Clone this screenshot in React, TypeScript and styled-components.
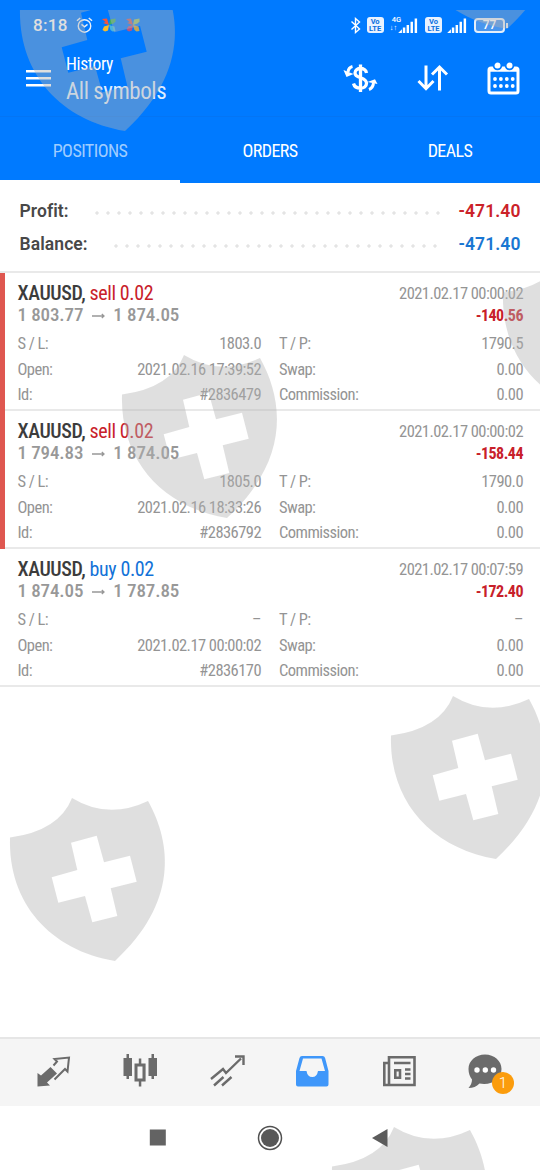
import React from "react";
import styled, { createGlobalStyle } from "styled-components";

const GlobalStyle = createGlobalStyle`
  * { box-sizing: border-box; }
  body { margin: 0; background: #fff; font-family: Roboto, sans-serif; }
`;
const condensed = `font-family: "Roboto Condensed", Roboto, sans-serif; font-stretch: 75%;`;

const Screen = styled.div`
  position: relative;
  width: 540px;
  height: 1170px;
  overflow: hidden;
  display: flex;
  flex-direction: column;
  background: #fff;
  white-space: nowrap;
`;
const Header = styled.header`
  height: 183px;
  flex: none;
  display: flex;
  flex-direction: column;
  background: #007aff;
  color: #fff;
`;
const StatusBar = styled.div`
  height: 48px;
  display: flex;
  align-items: center;
  justify-content: space-between;
  padding: 2px 32px 0 33px;
`;
const StatusGroup = styled.div<{ $gap: number }>`
  display: flex;
  align-items: center;
  gap: ${(p) => p.$gap}px;
`;
const Clock = styled.span`
  font-size: 17px;
  font-weight: 500;
  letter-spacing: 0.3px;
  line-height: 20px;
`;
const Toolbar = styled.div`
  height: 69px;
  display: flex;
  align-items: center;
  padding: 0 20px 8px 26px;
  border-bottom: 1px solid #0475f4;
`;
const Titles = styled.div`
  flex: 1;
  display: flex;
  flex-direction: column;
  margin-left: 15px;
  padding-top: 5px;
  ${condensed}
`;
const Title = styled.span`
  font-size: 17.5px;
  line-height: 22px;
  letter-spacing: -0.35px;
`;
const Subtitle = styled.span`
  font-size: 23px;
  line-height: 33px;
  font-weight: 400;
  letter-spacing: -0.45px;
  color: rgba(255, 255, 255, 0.88);
`;
const ToolbarActions = styled.div`
  display: flex;
  align-items: center;
  gap: 38px;
`;
const Tabs = styled.nav`
  flex: 1;
  display: grid;
  grid-template-columns: repeat(3, 1fr);
`;
const Tab = styled.div<{ $active?: boolean }>`
  display: flex;
  align-items: center;
  justify-content: center;
  ${condensed}
  font-size: 18px;
  letter-spacing: -0.55px;
  padding-top: ${(p) => (p.$active ? 3 : 1)}px;
  color: ${(p) => (p.$active ? "rgba(255,255,255,0.64)" : "#fff")};
  border-bottom: ${(p) => (p.$active ? "3px solid #fff" : "none")};
`;

const Summary = styled.section`
  height: 90px;
  flex: none;
  padding: 12px 19.5px 0 19.5px;
  border-bottom: 2px solid #e9e9e9;
`;
const SummaryRow = styled.div`
  height: 32.5px;
  display: flex;
  align-items: center;
  font-size: 17.5px;
  font-weight: 600;
  letter-spacing: 0.08px;
  color: #484848;
`;
const Leader = styled.span<{ $left: number; $right: number }>`
  flex: 1;
  height: 4px;
  margin: 4px ${(p) => p.$right}px 0 ${(p) => p.$left}px;
  background: radial-gradient(circle at 2px 2px, #e4e4e4 1.3px, transparent 2px) 0 0 / 11px 4px repeat-x;
`;
const Amount = styled.span<{ $tone: "red" | "blue" }>`
  color: ${(p) => (p.$tone === "red" ? "#cb2229" : "#1976d2")};
`;

const Deal = styled.article<{ $sell: boolean }>`
  height: 138px;
  flex: none;
  padding: 9px 17px 0 ${(p) => (p.$sell ? 12.5 : 17.5)}px;
  border-left: ${(p) => (p.$sell ? "5px solid #df5750" : "none")};
  box-shadow: inset 0 -2px 0 #e9e9e9;
  ${condensed}
`;
const DealHead = styled.div`
  display: flex;
  justify-content: space-between;
  align-items: center;
  height: 21.5px;
`;
const Symbol = styled.span`
  font-size: 20px;
  font-weight: 500;
  letter-spacing: -0.4px;
  color: #3c3c3c;
`;
const Side = styled.span<{ $sell: boolean }>`
  font-weight: 400;
  letter-spacing: -0.4px;
  color: ${(p) => (p.$sell ? "#c8202a" : "#1272d8")};
`;
const Prices = styled.span`
  font-size: 19px;
  font-weight: 500;
  letter-spacing: -0.1px;
  color: #989898;
  display: flex;
  align-items: center;
`;
const Arrow = styled.svg`
  margin: 3px 8px 0 9px;
`;
const When = styled.span`
  font-size: 16.5px;
  letter-spacing: -0.54px;
  color: #949494;
  padding-top: 1px;
`;
const Result = styled.span`
  font-size: 16px;
  font-weight: 700;
  letter-spacing: -0.5px;
  color: #c8202a;
  padding-top: 2px;
`;
const Details = styled.div`
  display: grid;
  grid-template-columns: 243.5px 244px;
  column-gap: 18px;
  grid-auto-rows: 25.6px;
  padding-top: 6px;
`;
const Detail = styled.div`
  display: flex;
  align-items: center;
  justify-content: space-between;
  font-size: 16.5px;
  letter-spacing: -0.55px;
  color: #949494;
`;

const Spacer = styled.div`
  flex: 1;
`;
const BottomBar = styled.nav`
  height: 69px;
  flex: none;
  display: flex;
  align-items: center;
  justify-content: space-between;
  padding: 0 37px 4px 34px;
  background: #f5f5f5;
  border-top: 2px solid #e6e6e6;
`;
const BottomItem = styled.div`
  position: relative;
  display: flex;
`;
const Badge = styled.span`
  position: absolute;
  left: 25px;
  top: 19px;
  width: 22px;
  height: 22px;
  border-radius: 50%;
  background: #fb9c0c;
  color: #fff;
  font: 300 15px/22px Roboto, sans-serif;
  text-align: center;
`;
const SystemNav = styled.div`
  position: relative;
  height: 64px;
  flex: none;
  display: flex;
  align-items: center;
  justify-content: space-between;
  padding: 0 152px 1px 149px;
`;
const HomeButton = styled.svg`
  margin-left: 2px;
`;
const Watermarks = styled.svg`
  position: absolute;
  inset: 0;
  pointer-events: none;
`;

const SignalBars = styled.svg`
  margin: 0 1px 0 -1px;
`;
const Bars = () => (
  <SignalBars width="20" height="15" viewBox="0 0 21 16" fill="#fff">
    <path d="M0 16l4-4v4zM5 10h2.600v6H5zM9 7.500h2.600V16H9zM13.200 4h2.600v12h-2.600zM17.600 0.500h2.600V16h-2.600z" />
  </SignalBars>
);
const VolteBox = styled.span`
  width: 17px;
  height: 16px;
  border-radius: 3px;
  background: #e8f2ff;
  color: #0a6fe0;
  display: flex;
  flex-direction: column;
  align-items: center;
  justify-content: center;
  font: 700 7.5px/7px Roboto, sans-serif;
`;
const NetLabel = styled.span`
  display: flex;
  flex-direction: column;
  align-items: flex-start;
  font: 500 7.5px/8px Roboto, sans-serif;
  margin-right: -8px;
  padding-bottom: 2px;
`;
const NetType = styled.span`
  margin-left: 2px;
`;
const BatteryText = styled.span`
  width: 31px;
  height: 15px;
  border: 2px solid #e4eefa;
  border-radius: 4px;
  font: 500 12px/11px Roboto, sans-serif;
  text-align: center;
  background: #4a96ee;
`;
const BatteryTip = styled.span`
  width: 2px;
  height: 5px;
  margin-left: 1px;
  background: #e4eefa;
`;
const Battery = styled.span`
  display: flex;
  align-items: center;
`;
const Volte = () => (
  <VolteBox>
    <span>Vo</span>
    <span>LTE</span>
  </VolteBox>
);
const Pinwheel = ({ faded }: { faded?: boolean }) => (
  <svg width="16" height="16" viewBox="0 0 16 16" opacity={faded ? 0.8 : 1}>
    <path d="M8 8L2 6L4.500 5L1 2L6 1.500Z" fill="#f4553b" />
    <path d="M8 8L9 2.500L14.500 1.500V4.500L12.500 6.500Z" fill={faded ? "#b8d048" : "#3fae62"} />
    <path d="M8 8L13.500 9.500L14.500 14L11.500 14.500L9.500 13Z" fill={faded ? "#f0b030" : "#48b4e0"} />
    <path d="M8 8L7 13.500L4 14.500L1.500 13L3 9.500Z" fill={faded ? "#e84c60" : "#fbbc28"} />
  </svg>
);

const SHIELD =
  "M0 39.500Q49 33 62 0Q98 22 138 3C162 46 168 105 105 163C40 152-2 105 0 39.500Z" +
  "M61 44.700L67.300 72L41.700 79.300L48.300 104.700L75 98L82.300 124.300L107.300 118L100.700 90.300L126.700 83.700L120 57.700L94 64.300L86.700 37.700Z";
const SHIELD_ORIGINS = [
  [20, -32],
  [402, -134],
  [503, 253],
  [122, 355],
  [391, 696],
  [10, 798],
  [332, 1127],
];

const deals = [
  { sell: true, from: "1 803.77", to: "1 874.05", when: "2021.02.17 00:00:02", result: "-140.56", sl: "1803.0", tp: "1790.5", open: "2021.02.16 17:39:52", id: "#2836479" },
  { sell: true, from: "1 794.83", to: "1 874.05", when: "2021.02.17 00:00:02", result: "-158.44", sl: "1805.0", tp: "1790.0", open: "2021.02.16 18:33:26", id: "#2836792" },
  { sell: false, from: "1 874.05", to: "1 787.85", when: "2021.02.17 00:07:59", result: "-172.40", sl: "–", tp: "–", open: "2021.02.17 00:00:02", id: "#2836170" },
];

const Pair = ({ label, value }: { label: string; value: string }) => (
  <Detail>
    <span>{label}</span>
    <span>{value}</span>
  </Detail>
);

export default function App() {
  return (
    <Screen>
      <GlobalStyle />
      <Header>
        <StatusBar>
          <StatusGroup $gap={8}>
            <Clock>8:18</Clock>
            <svg width="17" height="18" viewBox="0 0 18 18" fill="none" stroke="#e8f0fa" strokeWidth="1.500">
              <circle cx="9" cy="10" r="6.600" />
              <path d="M1 4.500L4.500 1.500M17 4.500L13.500 1.500M5.800 8.300L9 11L12.200 8.300" />
            </svg>
            <Pinwheel />
            <Pinwheel faded />
          </StatusGroup>
          <StatusGroup $gap={6}>
            <svg width="11" height="17" viewBox="0 0 11 17" fill="none" stroke="#fff" strokeWidth="1.400">
              <path d="M1.500 4.500L9.500 12L5.500 15.500V1.500L9.500 5L1.500 12.500" />
            </svg>
            <Volte />
            <NetLabel>
              <NetType>4G</NetType>
              <span>↓↑</span>
            </NetLabel>
            <Bars />
            <Volte />
            <Bars />
            <Battery>
              <BatteryText>77</BatteryText>
              <BatteryTip />
            </Battery>
          </StatusGroup>
        </StatusBar>
        <Toolbar>
          <svg width="25" height="18" viewBox="0 0 25 18" fill="#fff">
            <path d="M0 1h25v2.600H0zM0 8h25v2.600H0zM0 15h25v2.600H0z" />
          </svg>
          <Titles>
            <Title>History</Title>
            <Subtitle>All symbols</Subtitle>
          </Titles>
          <ToolbarActions>
            <svg width="36" height="30" viewBox="0 0 36 30" fill="none" stroke="#fff" strokeWidth="3.300">
              <path d="M17.500 1.500V29M23.500 10C23 4 12 4 12 10C12 16 23.500 13.500 23.500 20.300C23.500 27 12 26.500 10.500 20.500" />
              <path d="M9.500 3.500Q5.500 4.500 5 9M26 26.500Q30 25 30.500 20" strokeWidth="3" />
              <path d="M0.500 7L10.500 11L3.500 14ZM34.500 21L24.500 19L32 16.200Z" fill="#fff" stroke="none" />
            </svg>
            <svg width="32" height="28" viewBox="0 0 32 28" fill="none" stroke="#fff" strokeWidth="3">
              <path d="M9 1.500V24.500M1.500 17L9 24.700L16.500 17M22.500 26.500V3M15 10.500L22.500 3L30 10.500" />
            </svg>
            <svg width="33" height="33" viewBox="0 0 33 33" fill="none" stroke="#fff">
              <rect x="2" y="6" width="29" height="25" rx="2" strokeWidth="3" />
              <path d="M2 7.500H31" strokeWidth="4.500" />
              <circle cx="10.500" cy="3.500" r="3.900" fill="#fff" stroke="#007aff" strokeWidth="1.800" />
              <circle cx="22.500" cy="3.500" r="3.900" fill="#fff" stroke="#007aff" strokeWidth="1.800" />
              <path d="M8 17H26M8 24H26" strokeWidth="3.800" strokeLinecap="round" strokeDasharray="0 5.900" />
            </svg>
          </ToolbarActions>
        </Toolbar>
        <Tabs>
          <Tab $active>POSITIONS</Tab>
          <Tab>ORDERS</Tab>
          <Tab>DEALS</Tab>
        </Tabs>
      </Header>

      <Summary>
        <SummaryRow>
          <span>Profit:</span>
          <Leader $left={26} $right={17} />
          <Amount $tone="red">-471.40</Amount>
        </SummaryRow>
        <SummaryRow>
          <span>Balance:</span>
          <Leader $left={26} $right={19} />
          <Amount $tone="blue">-471.40</Amount>
        </SummaryRow>
      </Summary>

      {deals.map((d) => (
        <Deal key={d.id} $sell={d.sell}>
          <DealHead>
            <Symbol>
              XAUUSD, <Side $sell={d.sell}>{d.sell ? "sell" : "buy"} 0.02</Side>
            </Symbol>
            <When>{d.when}</When>
          </DealHead>
          <DealHead>
            <Prices>
              {d.from}
              <Arrow width="13" height="8" viewBox="0 0 13 8" fill="none" stroke="#989898" strokeWidth="1.300">
                <path d="M0 4H12M9.800 2L12 4L9.800 6" />
              </Arrow>
              {d.to}
            </Prices>
            <Result>{d.result}</Result>
          </DealHead>
          <Details>
            <Pair label="S / L:" value={d.sl} />
            <Pair label="T / P:" value={d.tp} />
            <Pair label="Open:" value={d.open} />
            <Pair label="Swap:" value="0.00" />
            <Pair label="Id:" value={d.id} />
            <Pair label="Commission:" value="0.00" />
          </Details>
        </Deal>
      ))}

      <Spacer />

      <BottomBar>
        <BottomItem>
          <svg width="37" height="36" viewBox="0 0 37 36">
            <path d="M3.500 33.500V20L7 22.500L16.500 14L23 20.500L13 29.500L16 32.500Z" fill="#6b6b6b" />
            <path d="M20.500 26.500L31 16L33.500 18.500L35 4.500L20.500 6L23 8.500L19.500 12.500" fill="none" stroke="#6b6b6b" strokeWidth="2" />
          </svg>
        </BottomItem>
        <BottomItem>
          <svg width="36" height="36" viewBox="0 0 36 36" fill="#6b6b6b">
            <path d="M1.500 5h3V1H7v4h3v18H7v3H4.500v-3h-3zM26.500 5h3V1H32v4h3v18h-3v3h-2.500v-3h-3z" />
            <path d="M12.500 10.500h4.300V5.500h2.500v5h4.300v18h-4.300v5h-2.500v-5h-4.300zM15.500 13.500v12h5V13.500z" fillRule="evenodd" />
          </svg>
        </BottomItem>
        <BottomItem>
          <svg width="36" height="36" viewBox="0 0 36 36" fill="none" stroke="#6b6b6b" strokeWidth="2.400">
            <path d="M2 26L14 16L17 20L32 5.500M5 32.500L14.500 24M13 32.500L22.500 24" />
            <path d="M26 3.500H34.500V12" />
          </svg>
        </BottomItem>
        <BottomItem>
          <svg width="34" height="36" viewBox="0 0 34 36">
            <path d="M7 3h20.500q2 0 2.600 2L33.500 18v13.500q0 2-2 2H3q-2 0-2-2V18L4.500 5Q5 3 7 3ZM8 5.500L4.500 18H11.500Q12.500 24 17.200 24Q22 24 23 18H30L26.500 5.500Z" fill="#3f97fa" fillRule="evenodd" />
          </svg>
        </BottomItem>
        <BottomItem>
          <svg width="36" height="36" viewBox="0 0 36 36" fill="none" stroke="#6b6b6b" strokeWidth="2.600">
            <path d="M9 4.300H34.500V32H9ZM9 10H4.300V32H9" />
            <path d="M14 10H30.500M25 16.500H30.500M25 21H30.500M25 25.500H30.500M15.300 17.300H20V24.800H15.300Z" />
          </svg>
        </BottomItem>
        <BottomItem>
          <svg width="36" height="36" viewBox="0 0 36 36">
            <path d="M18 1.500C27.500 1.500 34.500 8 34.500 16C34.500 24.500 27.500 31 17 31C15.500 31 14 30.800 12.500 30.500C9.500 33.500 6 35 1.500 35C3.800 32.500 5 29.500 5 26.500C2.800 23.500 1.500 20 1.500 16C1.500 8 8.500 1.500 18 1.500Z" fill="#6b6b6b" />
            <g fill="#fff">
              <circle cx="10" cy="17" r="2.700" />
              <circle cx="18.300" cy="17" r="2.700" />
              <circle cx="26.500" cy="17" r="2.700" />
            </g>
          </svg>
          <Badge>1</Badge>
        </BottomItem>
      </BottomBar>
      <Watermarks width="540" height="1170" viewBox="0 0 540 1170">
        <clipPath id="visible">
          <rect y="10" width="540" height="1160" />
        </clipPath>
        <g clipPath="url(#visible)" fill="#b2b2b2" fillOpacity="0.416">
          {SHIELD_ORIGINS.map(([x, y]) => (
            <path key={`${x}:${y}`} d={SHIELD} transform={`translate(${x} ${y})`} fillRule="evenodd" />
          ))}
        </g>
      </Watermarks>
      <SystemNav>
        <svg width="17" height="17" viewBox="0 0 17 17">
          <rect x="0.800" y="0.500" width="16" height="16" fill="#636363" />
        </svg>
        <HomeButton width="26" height="26" viewBox="0 0 26 26">
          <circle cx="13" cy="13" r="11.500" fill="none" stroke="#505050" strokeWidth="1.500" />
          <circle cx="13" cy="13" r="9" fill="#585858" />
        </HomeButton>
        <svg width="17" height="20" viewBox="0 0 17 20">
          <path d="M1 10L16.500 1V19Z" fill="#5c5c5c" />
        </svg>
      </SystemNav>
    </Screen>
  );
}
